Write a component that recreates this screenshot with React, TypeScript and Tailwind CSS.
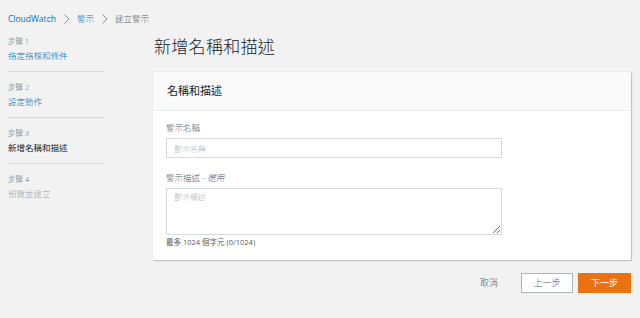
import React from 'react';

const STEPS = [
  { label: '步驟 1', name: '指定指標和條件', state: 'done' },
  { label: '步驟 2', name: '設定動作', state: 'done' },
  { label: '步驟 3', name: '新增名稱和描述', state: 'active' },
  { label: '步驟 4', name: '預覽並建立', state: 'todo' },
];

const Chevron = () => (
  <svg width="9" height="12" viewBox="0 0 9 12" className="mx-[6px]">
    <path d="M2.5 1.5 L7 6 L2.5 10.5" fill="none" stroke="#879596" strokeWidth="1" />
  </svg>
);

const App: React.FC = () => {
  return (
    <div
      className="w-[640px] h-[318px] bg-[#f2f2f2] overflow-hidden text-[#16191f] font-light"
      style={{ fontFamily: '"Open Sans", "Noto Sans CJK TC", sans-serif' }}
    >
      {/* Breadcrumb */}
      <div className="flex items-center h-[14px] mt-[12px] pl-[8px] text-[8.5px] leading-none font-normal">
        <span className="text-[#0073bb]">CloudWatch</span>
        <Chevron />
        <span className="text-[#0073bb] font-light">警示</span>
        <Chevron />
        <span className="text-[#545b64] font-light">建立警示</span>
      </div>

      <div className="flex">
        {/* Steps */}
        <div className="w-[104px] pl-[8px] shrink-0">
          {STEPS.map((s, i) => (
            <div
              key={s.label}
              className={`h-[46px] pt-[9px] ${i < STEPS.length - 1 ? 'border-b border-[#d5dbdb]' : ''}`}
            >
              <div className="text-[7.5px] leading-[12px] text-[#687078]">{s.label}</div>
              <div
                className={`text-[8.5px] leading-[12px] mt-[3px] ${
                  s.state === 'done' ? 'text-[#0073bb]' : s.state === 'active' ? 'text-[#16191f] font-normal' : 'text-[#9aa6a8]'
                }`}
              >
                {s.name}
              </div>
            </div>
          ))}
        </div>

        {/* Main */}
        <div className="ml-[49px] w-[478px]">
          <h1 className="mt-[9px] text-[17px] leading-[24px] font-light text-[#16191f] tracking-[0.3px] pl-[1px]">新增名稱和描述</h1>

          <div className="mt-[13px] bg-white shadow-[1px_1px_1px_rgba(0,0,0,0.18),0_0_1px_rgba(0,0,0,0.12)]">
            <div className="h-[39px] bg-[#fafafa] border-b border-[#eaeded] flex items-center pl-[14px] text-[11px] font-normal">
              名稱和描述
            </div>
            <div className="px-[13px] pt-[11px] pb-[13px]">
              <div className="text-[8.5px] leading-[12px] text-[#545b64] mb-[4px]">警示名稱</div>
              <input
                placeholder="警示名稱"
                className="block w-[336px] h-[20px] border border-[#d5dbdb] px-[6px] text-[8px] italic placeholder:text-[#aab7b8] outline-none"
              />
              <div className="text-[8.5px] leading-[12px] text-[#545b64] mt-[14px] mb-[4px]">
                警示描述 - <span className="italic">選用</span>
              </div>
              <textarea
                placeholder="警示描述"
                className="block w-[336px] h-[47px] border border-[#d5dbdb] px-[6px] py-[2px] text-[8px] italic placeholder:text-[#aab7b8] outline-none resize"
              />
              <div className="text-[7.5px] leading-[10px] text-[#545b64] mt-[2px] font-normal">最多 1024 個字元 (0/1024)</div>
            </div>
          </div>

          <div className="flex items-center justify-end mt-[13px] gap-[5px]">
            <button className="text-[9px] text-[#545b64] mr-[18px]">取消</button>
            <button className="w-[52px] h-[20px] bg-white border border-[#aab7b8] text-[9px] text-[#545b64]">上一步</button>
            <button className="w-[53px] h-[20px] bg-[#ec7211] text-[9px] text-white font-normal">下一步</button>
          </div>
        </div>
      </div>
    </div>
  );
};

export default App;
